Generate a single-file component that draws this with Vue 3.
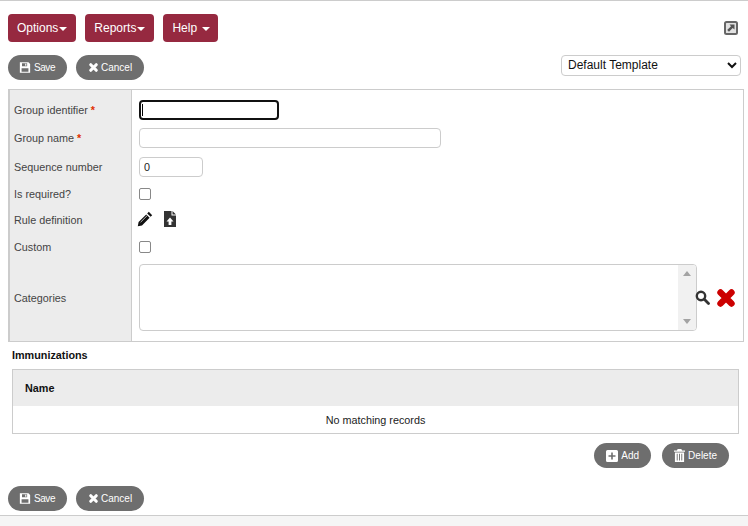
<script setup>
const menus = [
  { label: 'Options', gap: false },
  { label: 'Reports', gap: false },
  { label: 'Help', gap: true }
]
</script>

<template>
  <div class="page">
    <div class="content">
      <div class="menu-row">
        <button v-for="m in menus" :key="m.label" class="menu-btn" :class="{ spaced: m.gap }">
          {{ m.label }}<span class="caret"></span>
        </button>
        <svg class="popout" viewBox="0 0 14 14" width="14" height="14">
          <rect x="1" y="1" width="12" height="12" rx="1.500" fill="#e2e2e2" stroke="#666" stroke-width="2"/>
          <path d="M5.500 3.500h5V8.500L8.700 6.900 5 10.800 3.200 9 7 5.200z" fill="#555"/>
        </svg>
      </div>

      <div class="action-row">
        <button class="pill save">
          <svg class="save-ic" viewBox="0 0 14 14" width="12" height="13"><path fill-rule="evenodd" d="M1 1h10l2 2v10H1zM3.500 2v3.500h6V2zM7.200 2.600h1.400v2.300H7.200zM3 8v4h8V8z" fill="#fff"/></svg>
          <span class="save-text">Save</span>
        </button>
        <button class="pill">
          <svg viewBox="0 0 14 14" width="11" height="11"><path d="M3.500 3.500 10.500 10.500M10.500 3.500 3.500 10.500" stroke="#fff" stroke-width="4" stroke-linecap="round"/></svg>
          <span class="cancel-text">Cancel</span>
        </button>
        <select class="template">
          <option>Default Template</option>
        </select>
      </div>

      <div class="form-box">
        <div class="row r1">
          <label class="lab">Group identifier <span class="req">*</span></label>
          <div class="val"><input class="inp focused" type="text" /><span class="cursor"></span></div>
        </div>
        <div class="row r2">
          <label class="lab">Group name <span class="req">*</span></label>
          <div class="val"><input class="inp wide" type="text" /></div>
        </div>
        <div class="row r3">
          <label class="lab">Sequence number</label>
          <div class="val"><input class="inp num" type="text" value="0" /></div>
        </div>
        <div class="row r4">
          <label class="lab">Is required?</label>
          <div class="val"><span class="check"></span></div>
        </div>
        <div class="row r5">
          <label class="lab">Rule definition</label>
          <div class="val icons">
            <svg viewBox="0 0 16 16" width="16" height="16"><path d="M11.800 .8 15.200 4.200 13.600 5.800 10.200 2.400zM9.200 3.400 12.600 6.800 5 14.400 .8 15.200 1.600 11z" fill="#111"/><path d="M3.600 11.200 10 4.800" stroke="#fff" stroke-width=".7"/></svg>
            <svg viewBox="0 0 12 16" width="12" height="16"><path fill-rule="evenodd" d="M0 0h7.500v4.500H12V16H0zM8.500 0 12 3.500H8.500zM6 6.500 2.500 10.500H4.600V14h2.800v-3.500h2.100z" fill="#333"/></svg>
          </div>
        </div>
        <div class="row r6">
          <label class="lab">Custom</label>
          <div class="val"><span class="check"></span></div>
        </div>
        <div class="row r7">
          <label class="lab">Categories</label>
          <div class="val cats">
            <div class="listbox">
              <div class="scroll">
                <span class="arrow up"></span>
                <span class="arrow down"></span>
              </div>
            </div>
            <svg class="search" viewBox="0 0 15 15" width="15" height="15"><circle cx="6" cy="6" r="4.200" fill="none" stroke="#333" stroke-width="2.400"/><path d="M9.300 9.300 13.500 13.500" stroke="#333" stroke-width="2.800" stroke-linecap="round"/></svg>
            <svg class="del" viewBox="0 0 20 20" width="20" height="20"><path d="M4.500 4.500 15.500 15.500M15.500 4.500 4.500 15.500" stroke="#cc0000" stroke-width="6.400" stroke-linecap="round"/></svg>
          </div>
        </div>
      </div>

      <div class="section-title">Immunizations</div>

      <div class="table">
        <div class="thead">Name</div>
        <div class="tbody">No matching records</div>
      </div>

      <div class="table-actions">
        <button class="pill">
          <svg viewBox="0 0 12 12" width="12" height="12"><path fill-rule="evenodd" d="M1.500 0h9A1.500 1.500 0 0 1 12 1.500v9a1.500 1.500 0 0 1-1.500 1.500h-9A1.500 1.500 0 0 1 0 10.500v-9A1.500 1.500 0 0 1 1.500 0zM5.200 2.500v2.700H2.500v1.600h2.700v2.700h1.600V6.800h2.700V5.200H6.800V2.500z" fill="#fff"/></svg>
          Add
        </button>
        <button class="pill">
          <svg viewBox="0 0 12 14" width="11" height="13"><path fill-rule="evenodd" d="M4 0h4l.8 1.500H12v1.300H0V1.500h3.200zM1 3.600h10V14H1zM3 5v7.500h1V5zM5.500 5v7.500h1V5zM8 5v7.500h1V5z" fill="#fff"/></svg>
          Delete
        </button>
      </div>

      <div class="action-row bottom">
        <button class="pill save">
          <svg class="save-ic" viewBox="0 0 14 14" width="12" height="13"><path fill-rule="evenodd" d="M1 1h10l2 2v10H1zM3.500 2v3.500h6V2zM7.200 2.600h1.400v2.300H7.200zM3 8v4h8V8z" fill="#fff"/></svg>
          <span class="save-text">Save</span>
        </button>
        <button class="pill">
          <svg viewBox="0 0 14 14" width="11" height="11"><path d="M3.500 3.500 10.500 10.500M10.500 3.500 3.500 10.500" stroke="#fff" stroke-width="4" stroke-linecap="round"/></svg>
          <span class="cancel-text">Cancel</span>
        </button>
      </div>
    </div>
    <div class="footer"></div>
  </div>
</template>

<style>
html, body { margin: 0; background: #fff; overflow: hidden; }
</style>

<style scoped>
.page {
  width: 748px;
  height: 526px;
  display: flex;
  flex-direction: column;
  font-family: "Liberation Sans", Arial, sans-serif;
  color: #333;
  box-sizing: border-box;
  border-top: 1px solid #ccc;
}
.content {
  height: 514px;
  box-sizing: border-box;
  padding: 13px 4px 0 8px;
}
.footer {
  flex: 1;
  background: #f5f5f5;
  border-top: 1px solid #ccc;
}
button { font-family: inherit; cursor: pointer; }
.menu-row {
  display: flex;
  gap: 9px;
  align-items: center;
  height: 28px;
}
.menu-btn {
  height: 28px;
  padding: 0 9px;
  border: none;
  border-radius: 4px;
  background: #962940;
  color: #fff;
  font-size: 12px;
  display: flex;
  align-items: center;
  white-space: nowrap;
}
.caret {
  width: 0;
  height: 0;
  margin-left: 1px;
  border-left: 4px solid transparent;
  border-right: 4px solid transparent;
  border-top: 4px solid #fff;
  margin-top: 2px;
}
.spaced { padding-right: 8px; }
.spaced .caret { margin-left: 5px; }
.popout { margin-left: auto; margin-right: 6px; }
.action-row {
  display: flex;
  gap: 9px;
  margin-top: 13px;
  height: 25px;
  align-items: flex-start;
}
.pill {
  height: 25px;
  padding: 0 12px;
  border: none;
  border-radius: 13px;
  background: #6e6e6e;
  color: #fff;
  font-size: 10px;
  display: flex;
  align-items: center;
  gap: 3px;
  white-space: nowrap;
}
.save-ic { margin-left: -1px; }
.save-text { letter-spacing: -.45px; }
.cancel-text { margin-left: -1px; }
.template {
  margin-left: auto;
  margin-right: 3px;
  width: 180px;
  height: 21px;
  border: 1px solid #ccc;
  border-radius: 4px;
  background: #fff;
  color: #111;
  font-family: inherit;
  font-size: 12px;
  padding: 0 2px 2px;
}
.form-box {
  margin-top: 9px;
  padding-top: 6px;
  border: 1px solid #ccc;
  border-left-width: 2px;
  height: 253px;
  box-sizing: border-box;
  background: linear-gradient(to right, #ececec 121px, #ccc 121px, #ccc 122px, #fff 122px);
  display: flex;
  flex-direction: column;
}
.row { display: flex; align-items: center; flex: none; }
.r1 { height: 28px; }
.r2 { height: 28px; }
.r3 { height: 30px; }
.r4 { height: 24px; }
.r5 { height: 28px; }
.r6 { height: 26px; }
.r7 { flex: 1; }
.r7 .lab { margin-bottom: 5px; }
.lab {
  width: 122px;
  box-sizing: border-box;
  padding-left: 4px;
  font-size: 10.8px;
  color: #444;
  flex: none;
}
.req { color: #e03000; font-weight: 700; }
.val {
  padding-left: 7px;
  display: flex;
  align-items: center;
  position: relative;
}
.inp {
  box-sizing: border-box;
  height: 20px;
  border: 1px solid #ccc;
  border-radius: 4px;
  outline: none;
  padding: 0 4px;
  font-family: inherit;
  font-size: 10.8px;
  color: #222;
  background: #fff;
}
.focused { width: 140px; border: 2px solid #111; border-radius: 4px; }
.cursor {
  position: absolute;
  left: 10px;
  top: 4px;
  width: 1px;
  height: 12px;
  background: #000;
}
.wide { width: 302px; }
.num { width: 64px; }
.check {
  width: 10px;
  height: 10px;
  border: 1px solid #888;
  border-radius: 2px;
  background: #fff;
}
.icons { gap: 11px; padding-left: 5px; margin-top: -2px; }
.cats { align-self: flex-start; padding-top: 4px; }
.listbox {
  width: 558px;
  height: 67px;
  box-sizing: border-box;
  border: 1px solid #ccc;
  border-radius: 4px;
  display: flex;
  justify-content: flex-end;
  overflow: hidden;
}
.scroll {
  width: 18px;
  background: #f1f1f1;
  display: flex;
  flex-direction: column;
  justify-content: space-between;
  align-items: center;
  padding: 6px 0;
}
.arrow {
  width: 0;
  height: 0;
  border-left: 4px solid transparent;
  border-right: 4px solid transparent;
}
.up { border-bottom: 5px solid #a3a3a3; }
.down { border-top: 5px solid #a3a3a3; }
.search { margin-left: -2px; }
.del { margin-left: 6px; }
.section-title {
  margin-top: 7px;
  padding-left: 4px;
  font-size: 10.8px;
  font-weight: 700;
  color: #111;
  height: 13px;
  line-height: 13px;
}
.table {
  margin: 7px 5px 0 4px;
  border: 1px solid #ccc;
  height: 65px;
  box-sizing: border-box;
  font-size: 10.8px;
  color: #222;
}
.thead {
  height: 36px;
  background: #ececec;
  display: flex;
  align-items: center;
  padding-left: 12px;
  font-weight: 700;
  color: #111;
}
.tbody {
  height: 27px;
  display: flex;
  align-items: center;
  justify-content: center;
}
.table-actions {
  display: flex;
  justify-content: flex-end;
  gap: 11px;
  margin-top: 9px;
  padding-right: 15px;
}
.action-row.bottom { margin-top: 18px; }
</style>
